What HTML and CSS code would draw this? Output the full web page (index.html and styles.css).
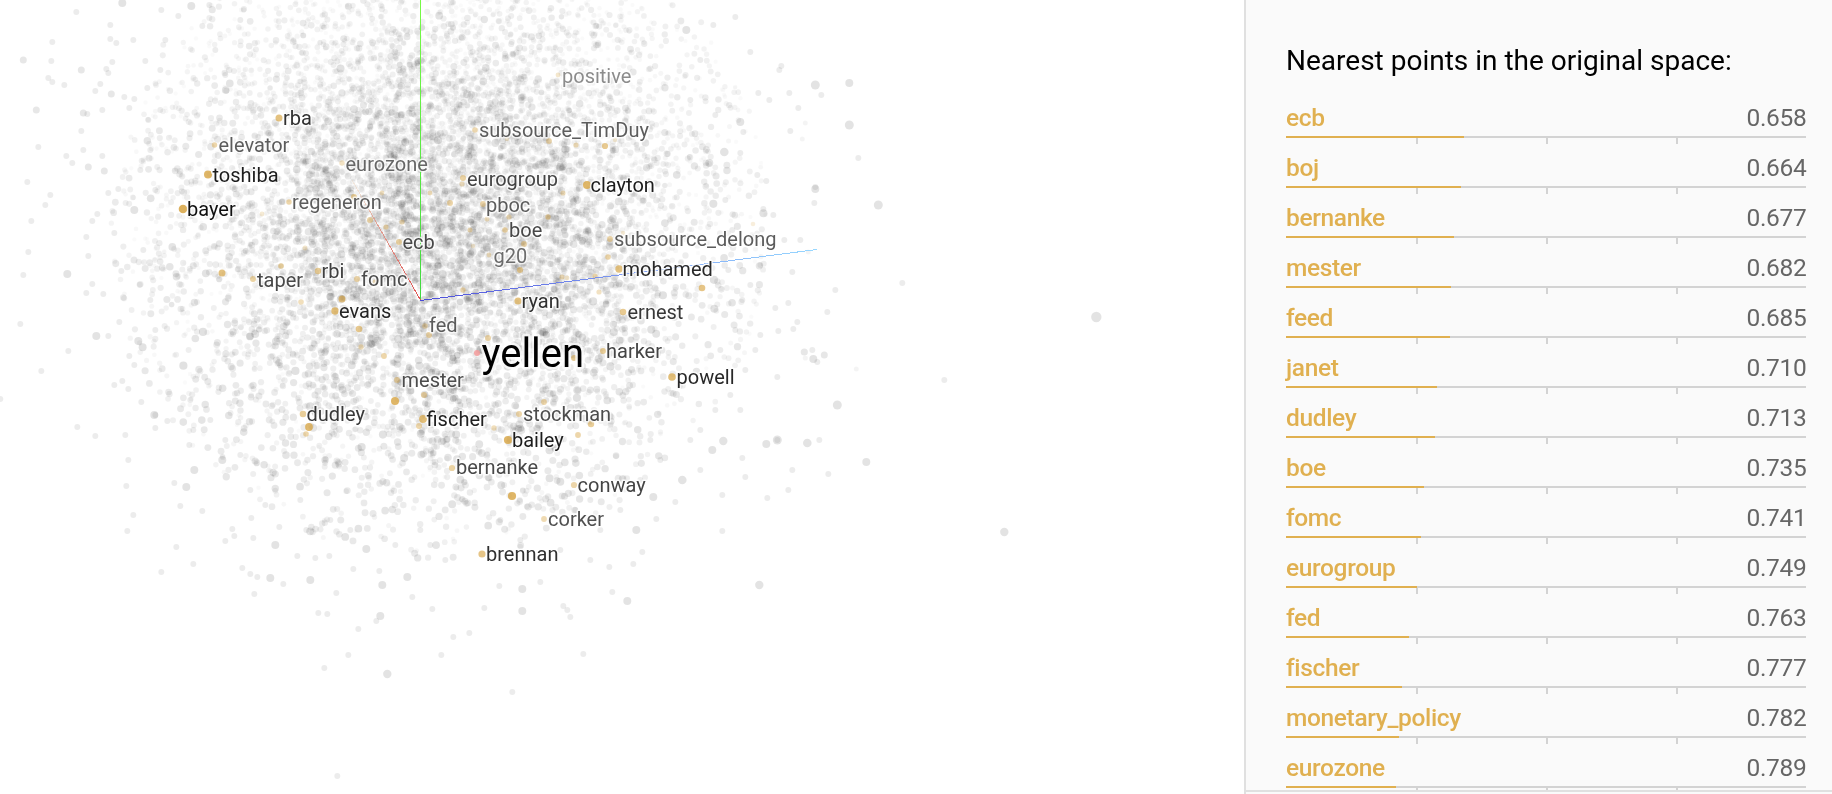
FILE: index.html
```
<!DOCTYPE html>
<html lang="en">
<head>
<meta charset="utf-8">
<title>Embedding projector</title>
<link rel="stylesheet" href="styles.css">
</head>
<body>
<div class="app">
  <main class="scatter">
    <canvas class="cloud" id="cloud" width="1244" height="794"></canvas>
    <svg class="overlay" width="1244" height="794" viewBox="0 0 1244 794">
      <defs>
        <linearGradient id="zAxis" gradientUnits="userSpaceOnUse" x1="420" y1="300" x2="817" y2="249"><stop offset="0" stop-color="#4a4ad8"/><stop offset=".5" stop-color="#7b98f2"/><stop offset="1" stop-color="#98d8ff"/></linearGradient>
        <linearGradient id="xAxis" gradientUnits="userSpaceOnUse" x1="420" y1="300" x2="352" y2="180"><stop offset="0" stop-color="#e05050"/><stop offset=".65" stop-color="#e09888" stop-opacity=".85"/><stop offset="1" stop-color="#f0c8a0" stop-opacity=".2"/></linearGradient>
        <linearGradient id="yAxis" gradientUnits="userSpaceOnUse" x1="420" y1="300" x2="420" y2="0"><stop offset="0" stop-color="#40d840"/><stop offset="1" stop-color="#78fa46"/></linearGradient>
      </defs>
      <g shape-rendering="crispEdges" fill="none">
        <path d="M420.5 0V300" stroke="url(#yAxis)"/>
        <path d="M420.5 300.500L817 249.500" stroke="url(#zAxis)"/>
        <path d="M420.500 300L352 180" stroke="url(#xAxis)"/>
      </g>
      <g class="labels">
        <text x="562" y="83" fill="#8c8c8c">positive</text>
        <text x="493.500" y="263" fill="#6c6c6c">g20</text>
        <text x="345.500" y="171" fill="#666">eurozone</text>
        <text x="292" y="209" fill="#5c5c5c">regeneron</text>
        <text x="218.500" y="152" fill="#5c5c5c">elevator</text>
        <text x="479" y="137" fill="#5c5c5c">subsource_TimDuy</text>
        <text x="614" y="246" fill="#5c5c5c">subsource_delong</text>
        <text x="486" y="212" fill="#5c5c5c">pboc</text>
        <text x="429" y="332" fill="#5c5c5c">fed</text>
        <text x="548" y="526" fill="#505050">corker</text>
        <text x="401.500" y="387" fill="#4c4c4c">mester</text>
        <text x="523" y="421" fill="#4c4c4c">stockman</text>
        <text x="361" y="286" fill="#4c4c4c">fomc</text>
        <text x="402.500" y="249" fill="#484848">ecb</text>
        <text x="509" y="237" fill="#484848">boe</text>
        <text x="257" y="287" fill="#484848">taper</text>
        <text x="456" y="474" fill="#484848">bernanke</text>
        <text x="577.500" y="492" fill="#444">conway</text>
        <text x="606" y="358" fill="#444">harker</text>
        <text x="467" y="186" fill="#444">eurogroup</text>
        <text x="321.500" y="278" fill="#404040">rbi</text>
        <text x="306.500" y="421" fill="#383838">dudley</text>
        <text x="627.500" y="319" fill="#383838">ernest</text>
        <text x="283" y="125" fill="#303030">rba</text>
        <text x="486" y="561" fill="#303030">brennan</text>
        <text x="521.500" y="308" fill="#303030">ryan</text>
        <text x="622.500" y="276" fill="#282828">mohamed</text>
        <text x="676.500" y="384" fill="#282828">powell</text>
        <text x="339" y="318" fill="#242424">evans</text>
        <text x="426.500" y="426" fill="#202020">fischer</text>
        <text x="590.500" y="192" fill="#1c1c1c">clayton</text>
        <text x="512" y="447" fill="#1c1c1c">bailey</text>
        <text x="212.500" y="182" fill="#1c1c1c">toshiba</text>
        <text x="187" y="216" fill="#101010">bayer</text>
        <text class="selected" x="481.500" y="366.500" fill="#000">yellen</text>
      </g>
    </svg>
  </main>
  <aside class="inspector">
    <div class="results">
      <h2 class="title">Nearest points in the original space:</h2>
      <div class="list" id="list"></div>
    </div>
  </aside>
</div>
<script src="main.js"></script>
</body>
</html>
```

FILE: styles.css
```
* { box-sizing: border-box; }
body {
  margin: 0;
  background: #fff;
  font-family: Roboto, "Liberation Sans", sans-serif;
  overflow: hidden;
}
.app {
  display: grid;
  grid-template-columns: 1244px 1fr;
  height: 794px;
}
.scatter {
  display: grid;
  overflow: hidden;
}
.cloud,
.overlay {
  grid-area: 1 / 1;
  display: block;
}
.labels text {
  font-size: 20px;
  stroke: rgba(255, 255, 255, .75);
  stroke-width: 3px;
  stroke-linejoin: round;
  paint-order: stroke;
}
.labels .selected {
  font-size: 40px;
  stroke-width: 5px;
}
.inspector {
  border-left: 2px solid #e0e0e0;
  background: #fafafa;
}
.results {
  height: 792px;
  padding: 40px 26px 0 40px;
  border-bottom: 2px solid #e0e0e0;
  overflow: hidden;
}
.title {
  margin: 0;
  height: 60px;
  font-size: 28px;
  font-weight: 400;
  line-height: 41px;
  color: #000;
  white-space: nowrap;
}
.row {
  height: 50px;
  display: flex;
  flex-direction: column;
}
.caption {
  height: 36px;
  display: flex;
  justify-content: space-between;
  font-size: 24.5px;
  letter-spacing: -.35px;
  line-height: 36px;
}
.name {
  color: #e0b050;
  font-weight: 500;
}
.value {
  color: #666;
  margin-right: -.35px;
}
.bar {
  height: 2px;
  background: #d3d3d3;
}
.fill {
  height: 2px;
  background: #e0b050;
}
.ticks {
  height: 6px;
  display: grid;
  grid-template-columns: repeat(4, 130px);
}
.tick + .tick { border-left: 2px solid #d3d3d3; }
```

FILE: main.js
```
const neighbors = [
  ['ecb', 0.658], ['boj', 0.664], ['bernanke', 0.677], ['mester', 0.682],
  ['feed', 0.685], ['janet', 0.710], ['dudley', 0.713], ['boe', 0.735],
  ['fomc', 0.741], ['eurogroup', 0.749], ['fed', 0.763], ['fischer', 0.777],
  ['monetary_policy', 0.782], ['eurozone', 0.789]
];
document.getElementById('list').innerHTML = neighbors.map(([name, d]) => `
  <div class="row">
    <div class="caption"><span class="name">${name}</span><span class="value">${d.toFixed(3)}</span></div>
    <div class="bar"><div class="fill" style="width:${((1 - d) * 100).toFixed(1)}%"></div></div>
    <div class="ticks"><i class="tick"></i><i class="tick"></i><i class="tick"></i><i class="tick"></i></div>
  </div>`).join('');

const ctx = document.getElementById('cloud').getContext('2d');
function dot(x, y, r, color) {
  ctx.fillStyle = color;
  ctx.beginPath();
  ctx.arc(x, y, r, 0, Math.PI * 2);
  ctx.fill();
}

// Seeded generator keeps the cloud identical on every load.
let seed = 20177;
function rand() {
  seed = (seed + 0x6D2B79F5) | 0;
  let t = Math.imul(seed ^ (seed >>> 15), 1 | seed);
  t = (t + Math.imul(t ^ (t >>> 7), 61 | t)) ^ t;
  return ((t ^ (t >>> 14)) >>> 0) / 4294967296;
}
function gauss() {
  return Math.sqrt(-2 * Math.log(1 - rand())) * Math.cos(2 * Math.PI * rand());
}

// Main body of the cloud: z is nearness, lower points sit closer to the eye.
const body = [];
for (let i = 0; i < 11800; i++) {
  const s = 0.75 + rand() * 0.6;
  const x = 440 + gauss() * 136 * s;
  const y = 206 + gauss() * 134 * s;
  if (((x - 440) / 330) ** 2 + ((y - 225) / 335) ** 2 > 1) continue;
  const z = Math.max(0, Math.min(1, 0.34 + gauss() * 0.22 + (y - 220) / 1500));
  body.push([x, y, z]);
}
body.sort((a, b) => a[2] - b[2]);
for (const [x, y, z] of body) {
  dot(x, y, 2.2 + z * 1.9, `rgba(0,0,0,${(0.018 + z * 0.1).toFixed(3)})`);
}

// Sparse points around the body: x, y and an optional radius.
const sparse = `76,12 122,3,4 110,25 161,10 191,6,4 209,5 202,26 178,16 52,42 110,39 116,43 133,40 23,60,3.5 51,61 81,70,3.5
106,69 112,62 108,73 145,61 48,78 52,82 64,85 95,91 100,84 111,94,3.5 124,97 134,99 36,110,3.5 102,110 83,113,3.5 87,114
81,131 129,108 38,147 83,150 66,156 72,163 102,156 88,167,3.5 104,171,3.5 27,182 50,195 45,205 31,221 118,189 108,193
134,210,4 92,221 97,214 114,233 86,237 28,252 88,256 23,275 67,274,4 121,271 92,284 86,293 103,294 20,324 96,336,4 108,336
119,322 68,351 41,371 114,385 122,381 128,389 134,365 129,356 138,341,4 141,402 0,399 154,415,4 155,415 155,428 167,421 77,427
95,436 125,435 128,460 126,486 133,515 127,531 176,547 193,564 161,572 180,506 186,487,4 174,483 194,470,4 222,460,4
189,445 193,430 202,511 232,529 234,536 225,541 251,518 253,538 275,545,4 279,527 242,568 250,574 257,577 270,578,4
254,594 283,584 310,580,4 306,530 297,556 315,558 329,556 336,593 318,613 327,614 353,569 366,549,4 380,616,4 376,621
382,585,4 379,571 358,629 348,655 324,668 387,674,4.2 337,776 407,577,4 412,597 432,609 441,655 453,637 469,633 484,608
499,586 522,589,4 522,611,4 540,582 563,606 567,610 570,617 583,654 512,692 627,601,4 612,592 609,567 633,564 642,552
636,530,4 656,519 675,502 653,497,4 682,480,4.3 722,495 722,531 759,585,4.2 767,498 788,490 745,477 792,470 742,458
712,450,4 723,441,4.2 766,444,4 777,440,4.5 777,440 807,443,4.3 819,440 866,462,4 828,474 837,405,4.5 856,369,2.5 777,377
804,352,3.6 812,350 805,358,2.6 813,359,4 817,362 824,355,3.5 827,312 797,322 793,329 778,331 835,290 792,272 788,303 775,308
878,205,4.5 858,158 815,189,4 815,187 814,203 849,125,4.5 849,83,4 815,85,4.5 821,95 798,108 805,123,2.5 790,131
802,139,2.5 781,66 779,70 750,52 735,17 713,25 686,30,4 758,93 789,93 769,100 740,122,4 743,132 724,152,4.3 709,163,4
740,153 757,175 766,181 763,209 773,215 784,240 800,240 808,252,2.5 902,283 1096,317,5.2 944,380 1004,532,4.2
150,150 155,190 148,120 140,170 143,250 150,300 155,330 147,88 160,70 160,110 165,40 215,50 240,20 225,75 700,60 690,100
715,115 725,200 732,230 745,250 750,285 760,265 742,300 735,330 720,350 745,370 760,335 730,395 700,430 715,410 740,410
690,440 700,470 755,350 728,270 190,400 210,420 225,440 240,455 250,490 265,505 300,500 330,520 350,530 395,545 430,545
420,530 445,560 500,520 520,540 560,550 590,560 600,530 620,510 575,510 660,460 650,440 640,480 590,500`.split(/\s+/);
for (const item of sparse) {
  const [x, y, r = 3] = item.split(',').map(Number);
  dot(x + 0.3, y, r, `rgba(0,0,0,${r >= 4 ? 0.11 : r > 3 ? 0.095 : r < 3 ? 0.045 : 0.075})`);
}

// Highlighted neighbours: x, y, radius, opacity.
const near = `279,118,3.5,.75 214.5,145,2.7,.5 208,174.5,4,.9 183,209,4.3,.95 289,202,2.8,.5 342,163,2.7,.35 354,197,3,.6 382,193,2.4,.35
370,220,3,.5 386,227,2.6,.45 402,222,2.6,.4 399,242,3,.55 262,214,2.4,.25 305,248,2.5,.3 281,266,2.8,.55 222,273,3.5,.75
253,279,3,.55 318,271,3.2,.6 357,279,3,.5 375,282,2.4,.4 301,302,2.8,.4 342,299,3.5,.7 335,311,3.7,.8 430,193,2.4,.4
450,203,3,.5 463,290,2.7,.45 359,329,3.3,.65 361,347,2.7,.4 384,356,2.9,.5 397,380,2.9,.5 395,401,4,.9 424,395,3,.5
303,414,3.3,.6 309,427,3.9,.85 306,434,2.8,.5 423,419,3.9,.8 419,426,3,.5 429,335,3,.5 425,326,2.8,.4 488,338,3,.5
508,440,4.1,.9 494,428,2.7,.4 452,468,3.1,.55 512,496,4.1,.9 574,485,3.1,.5 544,519,2.9,.45 482,554,3.6,.7 519,414,3,.5
544,402,2.9,.5 591,424,3.2,.6 578,435,2.9,.5 672,377,3.8,.8 603,351,3,.6 574,358,3,.6 623,312,3.3,.65 702,288,3.3,.7
518,301,3.6,.75 599,292,2.6,.35 595,276,2.6,.45 562,277,2.6,.4 567,278,2.4,.3 520,270,3,.6 619,269,3.7,.75 587,185,4,.9
475,130,2.8,.45 558,75,2.4,.3 549,141,2.9,.45 576,145,2.6,.4 605,146,3.1,.65 615,140,2.2,.25 463,178,3,.55 462,184,2.5,.35
563,193,2.6,.4 483,204,2.9,.5 487,219,2.5,.35 509,217,2.6,.4 548,217,2.7,.5 505,230,2.8,.5 524,244,2.9,.5 489,255,2.4,.35
608,257,2.8,.5 610,239,2.9,.5 470,230,2.5,.4 623,233,2.3,.25 507,139,2.2,.25 473,246,2.3,.25 753,224,2.3,.2`.split(/\s+/);
for (const item of near) {
  const [x, y, r, a] = item.split(',').map(Number);
  dot(x, y, r, `rgba(214,162,62,${(a * 0.88).toFixed(2)})`);
}
dot(477, 353, 3, 'rgba(245,150,150,.8)');
```
